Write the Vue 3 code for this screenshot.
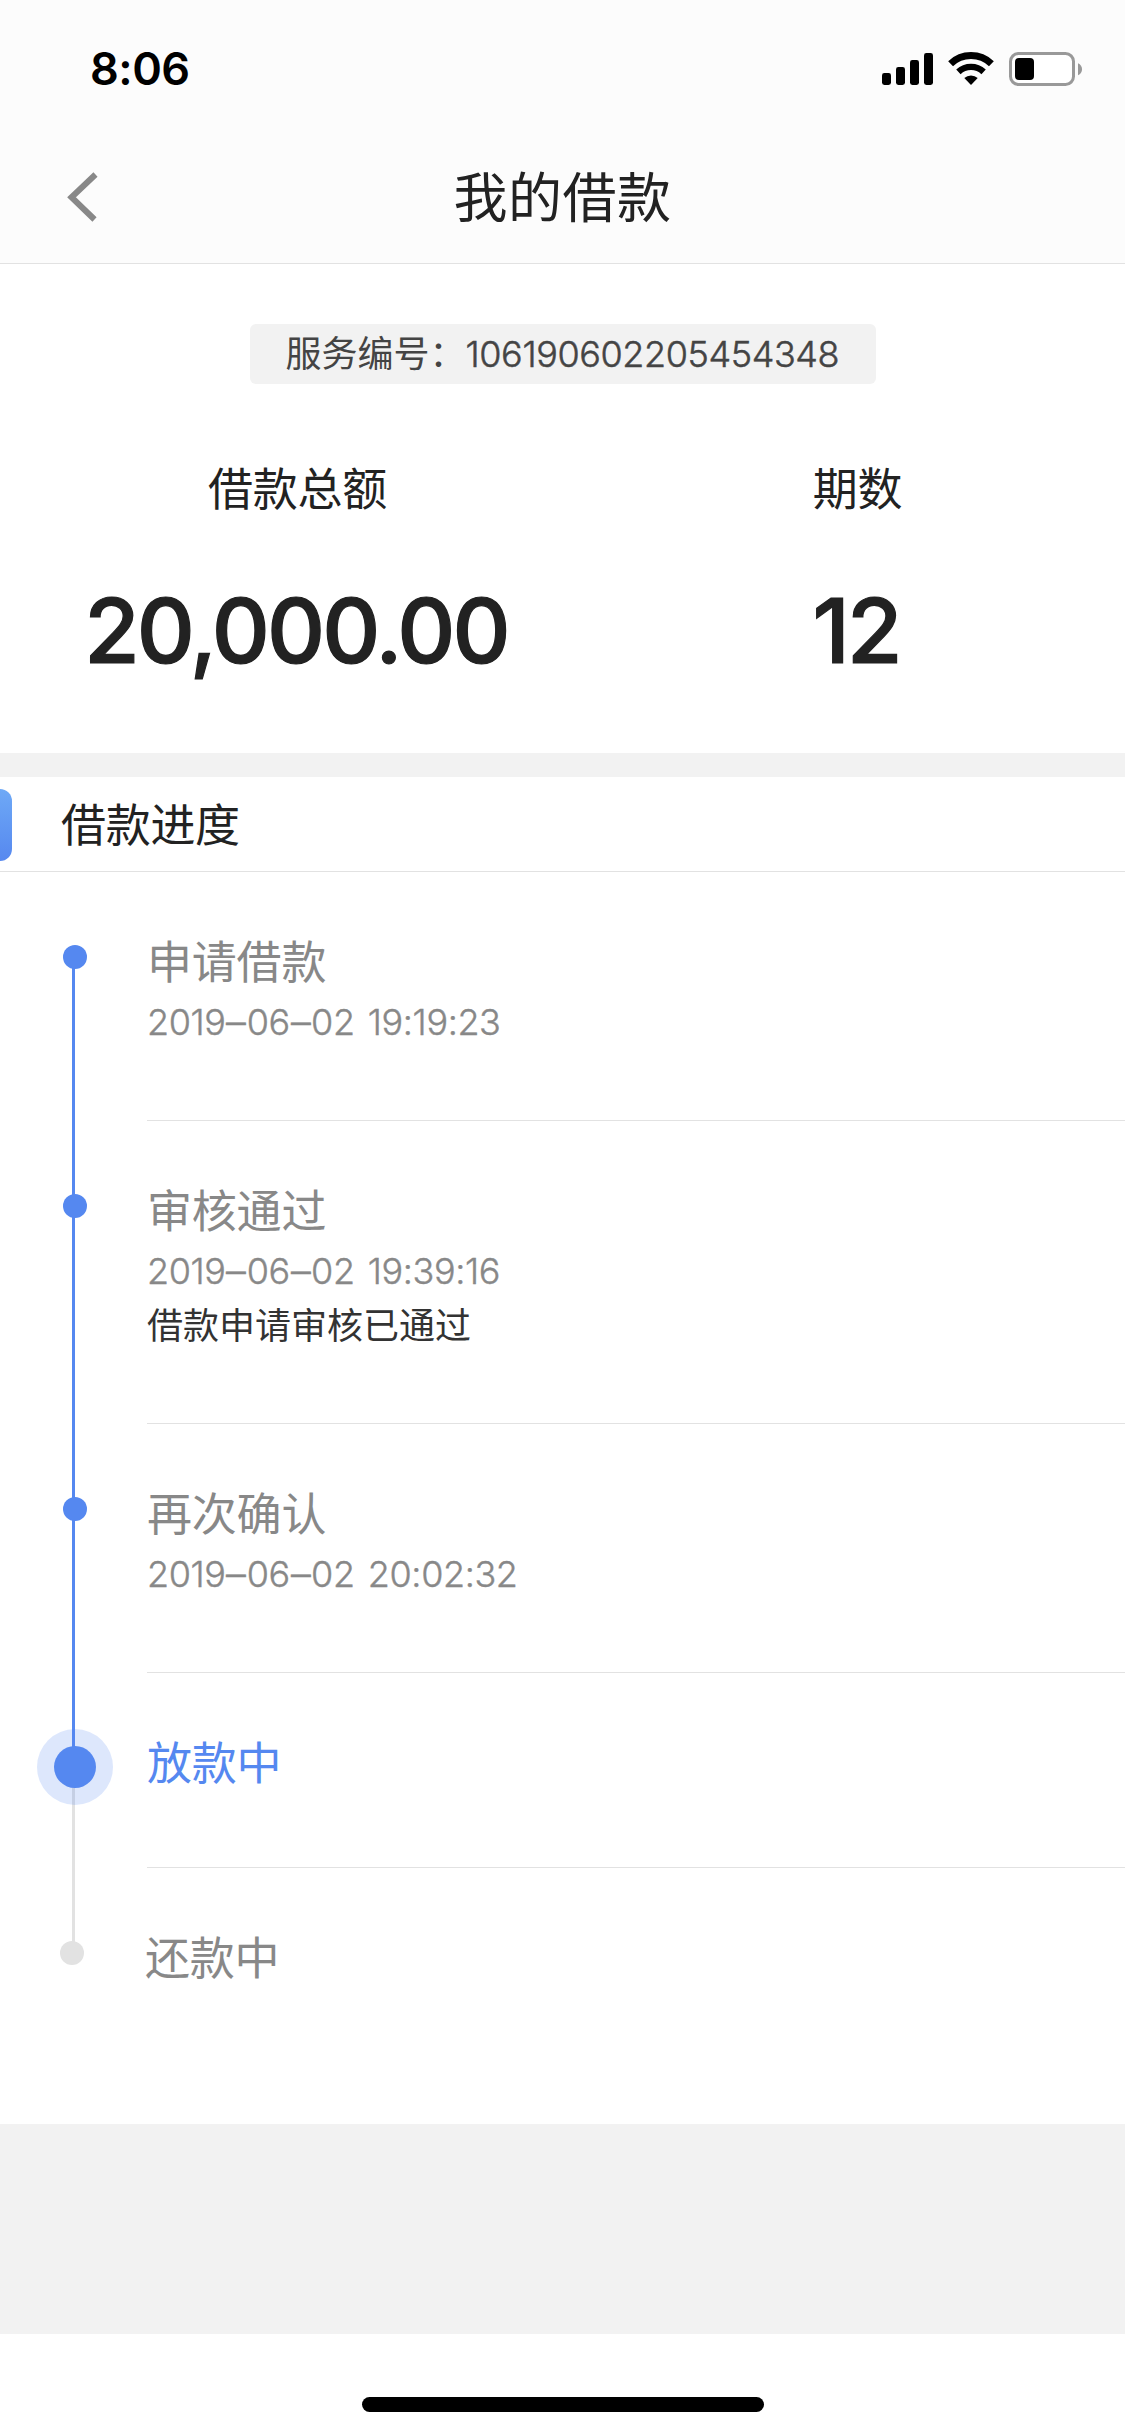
<script setup>
const summary = [
  { label: '借款总额', value: '20,000.00' },
  { label: '期数', value: '12' },
]

const steps = [
  { title: '申请借款', date: ['2019', '06', '02'], clock: '19:19:23', state: 'done' },
  { title: '审核通过', date: ['2019', '06', '02'], clock: '19:39:16', note: '借款申请审核已通过', state: 'done' },
  { title: '再次确认', date: ['2019', '06', '02'], clock: '20:02:32', state: 'done' },
  { title: '放款中', state: 'active' },
  { title: '还款中', state: 'pending' },
]
</script>

<template>
  <div class="screen">
    <header class="header">
      <div class="status">
        <span class="clock">8:06</span>
        <svg class="status-icons" width="202" height="36" viewBox="0 0 202 36">
          <rect x="0" y="22" width="9" height="12" rx="2.4" />
          <rect x="14" y="16" width="9" height="18" rx="2.4" />
          <rect x="28" y="9" width="9" height="25" rx="2.4" />
          <rect x="42" y="2" width="9" height="32" rx="2.4" />
          <g fill="none" stroke="#000">
            <path d="M68.600 12.800a29.500 29.500 0 0 1 40.800 0" stroke-width="7" />
            <path d="M76.400 20.800a18.500 18.500 0 0 1 25.200 0" stroke-width="6.400" />
          </g>
          <path d="M89 34l-6.700-6.900a9.600 9.600 0 0 1 13.400 0z" />
          <rect x="128.500" y="2.500" width="63" height="31" rx="8" fill="#fff" stroke="#999" stroke-width="3" />
          <rect x="133" y="7" width="19" height="22" rx="4" />
          <path d="M196 12.200c5.400 2.400 5.400 9.600 0 12z" fill="#999" />
        </svg>
      </div>
      <nav class="nav">
        <svg class="back" width="34" height="52" viewBox="0 0 34 52">
          <path d="M29.500 2.500L5.500 25.200L28.500 47.500" fill="none" stroke="#888" stroke-width="6" />
        </svg>
        <h1>我的借款</h1>
      </nav>
    </header>

    <section class="summary">
      <div class="number">服务编号：<span class="digits">106190602205454348</span></div>
      <div class="figures">
        <div v-for="item in summary" :key="item.label" class="figure">
          <span class="label">{{ item.label }}</span>
          <span class="value">{{ item.value }}</span>
        </div>
      </div>
    </section>

    <section class="progress">
      <div class="progress-head">
        <i class="marker"></i>
        <h2>借款进度</h2>
      </div>
      <ol class="steps">
        <li v-for="step in steps" :key="step.title" class="step" :class="step.state">
          <div class="rail"><i class="dot"></i></div>
          <div class="body">
            <div class="title">{{ step.title }}</div>
            <div v-if="step.date" class="time"><template v-for="(part, i) in step.date" :key="i"><span v-if="i" class="dash">–</span>{{ part }}</template>{{ ' ' + step.clock }}</div>
            <div v-if="step.note" class="note">{{ step.note }}</div>
          </div>
        </li>
      </ol>
    </section>

    <footer class="home"><i class="home-bar"></i></footer>
  </div>
</template>

<style>
body {
  margin: 0;
  background: #f2f2f2;
}
</style>

<style scoped>
.screen {
  display: flex;
  flex-direction: column;
  width: 1125px;
  height: 2436px;
  overflow: hidden;
  background: #f2f2f2;
  color: #222;
  font-family: Inter, "Noto Sans CJK SC", sans-serif;
}
h1, h2, ol {
  margin: 0;
  padding: 0;
  font-weight: 400;
}
.header {
  box-sizing: border-box;
  height: 264px;
  background: #fcfcfc;
  border-bottom: 1px solid #e2e2e2;
}
.status {
  display: flex;
  justify-content: space-between;
  height: 132px;
  padding: 0 41px 0 90px;
}
.clock {
  margin-top: 39px;
  line-height: 60px;
  font-size: 45px;
  font-weight: 600;
  letter-spacing: -0.5px;
  color: #000;
}
.status-icons {
  margin-top: 51px;
}
.nav {
  display: grid;
  grid-template-columns: 66px 1fr 66px;
  align-items: center;
  height: 131px;
}
.back {
  grid-column: 1;
  justify-self: end;
  margin-right: -34px;
}
h1 {
  padding-top: 3px;
  text-align: center;
  font-size: 54px;
  line-height: 80px;
  letter-spacing: 0.5px;
}
.summary {
  display: flex;
  flex-direction: column;
  align-items: center;
  height: 489px;
  background: #fff;
}
.number {
  box-sizing: border-box;
  width: 626px;
  height: 60px;
  margin-top: 60px;
  padding-left: 36px;
  border-radius: 6px;
  background: #f2f2f2;
  color: #444;
  font-size: 36px;
  line-height: 60px;
  white-space: nowrap;
}
.digits {
  font-weight: 300;
  letter-spacing: -0.4px;
  -webkit-text-stroke: 0.5px currentColor;
}
.figures {
  display: grid;
  grid-template-columns: 560px 560px;
  width: 1090px;
}
.figure {
  display: flex;
  flex-direction: column;
  align-items: center;
}
.label {
  margin-top: 73px;
  font-size: 45px;
  line-height: 66px;
  letter-spacing: -0.3px;
}
.value {
  margin-top: 54px;
  padding-right: 3px;
  font-size: 90px;
  line-height: 108px;
  font-weight: 500;
  letter-spacing: -2.8px;
  -webkit-text-stroke: 1.2px currentColor;
}
.progress {
  height: 1347px;
  margin-top: 24px;
  background: #fff;
}
.progress-head {
  box-sizing: border-box;
  display: flex;
  height: 95px;
  padding-top: 12px;
  border-bottom: 1px solid #e2e2e2;
}
.marker {
  width: 12px;
  height: 72px;
  border-radius: 0 12px 12px 0;
  background: linear-gradient(#6ea9f6, #5688ef);
}
h2 {
  margin-left: 49px;
  font-size: 45px;
  line-height: 73px;
  letter-spacing: -0.3px;
}
.steps {
  list-style: none;
}
.step {
  --dot-y: 85px;
  display: flex;
  color: #888;
}
.rail {
  position: relative;
  width: 147px;
}
.rail::before,
.rail::after {
  content: "";
  position: absolute;
  left: 72px;
  width: 3px;
  background: #5588f0;
}
.rail::before {
  top: 0;
  height: var(--dot-y);
}
.rail::after {
  top: var(--dot-y);
  bottom: 0;
}
.step:first-child .rail::before,
.step:last-child .rail::after {
  display: none;
}
.active .rail::after,
.pending .rail::before {
  background: #e2e2e2;
}
.dot {
  position: absolute;
  z-index: 1;
  left: 63px;
  top: calc(var(--dot-y) - 12px);
  width: 24px;
  height: 24px;
  border-radius: 50%;
  background: #5588f0;
}
.active {
  --dot-y: 94px;
}
.active .dot {
  left: 54px;
  top: calc(var(--dot-y) - 21px);
  width: 42px;
  height: 42px;
  box-shadow: 0 0 0 17px rgba(85, 136, 240, 0.2);
}
.pending .dot {
  left: 60px;
  background: #e2e2e2;
}
.body {
  flex: 1;
  padding: 58px 0 70px;
  border-bottom: 1px solid #e2e2e2;
}
.pending .body {
  margin-left: -2px;
}
.step:last-child .body {
  border-bottom: none;
}
.title {
  font-size: 45px;
  line-height: 66px;
  letter-spacing: -0.2px;
}
.active .title {
  color: #5588f0;
}
.time {
  margin-top: -1px;
  padding-bottom: 1px;
  font-size: 36px;
  font-weight: 300;
  line-height: 54px;
  letter-spacing: -0.4px;
  word-spacing: 3.5px;
  -webkit-text-stroke: 0.4px currentColor;
}
.dash {
  display: inline-block;
  margin: 0 1.8px;
  transform: scaleX(1.1);
}
.note {
  color: #333;
  font-size: 36px;
  line-height: 54px;
}
.home {
  display: flex;
  justify-content: center;
  align-items: flex-start;
  height: 102px;
  margin-top: auto;
  background: #fff;
}
.home-bar {
  width: 402px;
  height: 15px;
  margin-top: 63px;
  border-radius: 8px;
  background: #000;
}
</style>
